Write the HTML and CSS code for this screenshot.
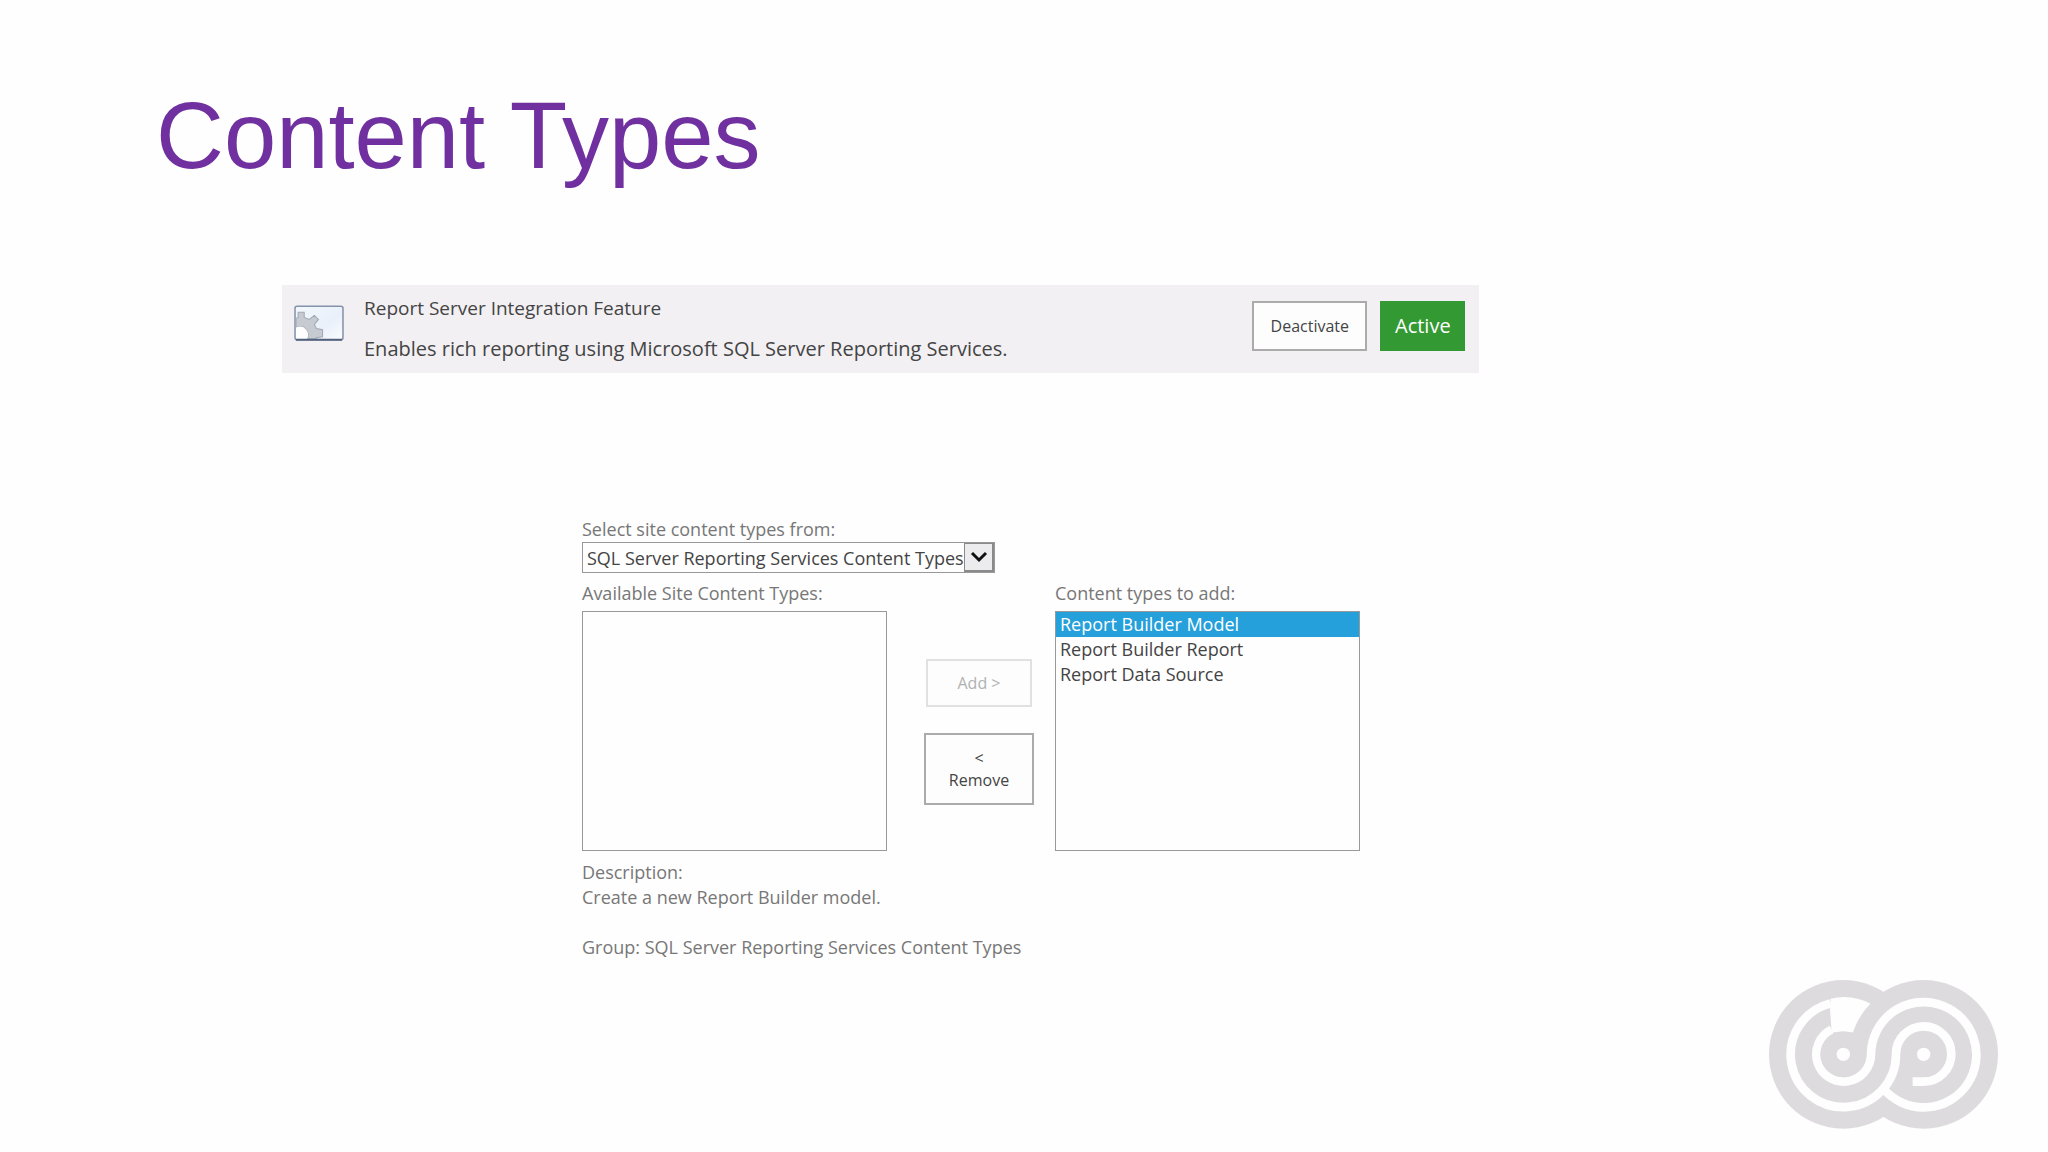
FILE: index.html
```
<!DOCTYPE html>
<html lang="en">
<head>
    <meta charset="UTF-8">
    <meta name="viewport" content="width=device-width, initial-scale=1.0">
    <title>Content Types</title>
    <link rel="stylesheet" href="styles.css">
</head>
<body>
    <main class="slide">
        <h1>Content Types</h1>

        <section class="feature">
            <svg class="feature-icon" viewBox="0 0 49 35" aria-hidden="true">
                <defs>
                    <linearGradient id="panel" x1="0" y1="0" x2="1" y2="1">
                        <stop offset="0" stop-color="#f4f8fd"/>
                        <stop offset="0.6" stop-color="#e9f0fa"/>
                        <stop offset="1" stop-color="#fbfcff"/>
                    </linearGradient>
                </defs>
                <rect x="1" y="1" width="47" height="33" rx="2" fill="url(#panel)" stroke="#8592ab" stroke-width="1.5"/>
                <path d="M2 13 L4 12 V7 H10 V12 L15 14 L20 10 L24 14 L20 19 L22 23 L28 24 V31 L22 32 V33 H13 Q15 28 12 24 Q8 19 2 22 Z" fill="#c6cad1" stroke="#a2a8b2"/>
                <path d="M2 22 Q8 19 12 24 Q15 28 13 33 H2 Z" fill="#fff"/>
                <path d="M2 34 H47" stroke="#52617c" stroke-width="2"/>
            </svg>
            <div class="feature-text">
                <h2>Report Server Integration Feature</h2>
                <p>Enables rich reporting using Microsoft SQL Server Reporting Services.</p>
            </div>
            <button type="button" class="btn deactivate">Deactivate</button>
            <span class="status">Active</span>
        </section>

        <form class="picker">
            <label for="group">Select site content types from:</label>
            <div class="dropdown">
                <select id="group">
                    <option>SQL Server Reporting Services Content Types</option>
                </select>
                <span class="arrow">
                    <svg viewBox="0 0 18 12" aria-hidden="true"><path d="M2 2 L9 9 L16 2" fill="none" stroke="#111" stroke-width="3"/></svg>
                </span>
            </div>
            <div class="lists">
                <div class="list">
                    <label for="available">Available Site Content Types:</label>
                    <select id="available" size="8" multiple></select>
                </div>
                <div class="moves">
                    <button type="button" class="btn add" disabled>Add &gt;</button>
                    <button type="button" class="btn remove">&lt;<br>Remove</button>
                </div>
                <div class="list">
                    <label for="chosen">Content types to add:</label>
                    <select id="chosen" size="8" multiple>
                        <option selected>Report Builder Model</option>
                        <option>Report Builder Report</option>
                        <option>Report Data Source</option>
                    </select>
                </div>
            </div>
            <p>Description:<br>Create a new Report Builder model.</p>
            <p class="group">Group: SQL Server Reporting Services Content Types</p>
        </form>

        <svg class="logo" viewBox="58 58 687 447" role="img" aria-label="Logo">
            <g fill="#dedbdf">
                <circle cx="281" cy="281" r="223"/>
                <circle cx="522" cy="281" r="223"/>
            </g>
            <path d="M243 114 L241 145 L246 215 L310 215 A223 223 0 0 1 362 129 A171 171 0 0 0 243 114 Z" fill="#fefefe"/>
            <g fill="none" stroke="#fefefe" stroke-width="26">
                <path d="M243 128 A158 158 0 1 0 439 281 A83 83 0 1 1 522 363 H489"/>
                <path d="M246 207 A82 82 0 1 0 364 281 A158 158 0 1 1 402 385"/>
            </g>
            <circle cx="281" cy="281" r="69" fill="#dedbdf"/>
            <circle cx="281" cy="281" r="20" fill="#fefefe"/>
            <circle cx="522" cy="281" r="20" fill="#fefefe"/>
        </svg>
    </main>
</body>
</html>
```
FILE: styles.css
```
* {
    box-sizing: border-box;
}
body {
    margin: 0;
    background-color: #fefefe;
    color: #444;
    font-family: "Open Sans", "Noto Sans", sans-serif;
    font-size: 18px;
    line-height: 25px;
}
h1, h2, p {
    margin: 0;
    font-weight: normal;
}
.slide {
    display: flex;
    flex-direction: column;
    min-height: 100vh;
    padding: 80px 50px 23px 156px;
}
h1 {
    color: #7030a0;
    font-family: "Liberation Sans", Arial, sans-serif;
    font-size: 94px;
    line-height: 112px;
}
.feature {
    display: flex;
    align-items: flex-start;
    width: 65%;
    margin: 93px 0 0 126px;
    padding: 11px 14px 12px 12px;
    background-color: #f2f0f3;
}
.feature-icon {
    width: 50px;
    height: 36px;
    margin: 9px 20px 0 0;
}
.feature-text {
    flex: 1;
}
.feature h2 {
    font-size: 19px;
    line-height: 25px;
}
.feature p {
    margin-top: 15px;
    font-size: 20px;
}
.btn {
    border: 2px solid #ababab;
    background-color: #fdfdfd;
    color: #444;
    font-family: inherit;
    font-size: 16px;
    line-height: 22px;
}
.deactivate {
    width: 115px;
    height: 50px;
    margin: 5px 13px 0 0;
    padding: 0;
}
.status {
    width: 85px;
    margin-top: 5px;
    background-color: #339933;
    color: #fff;
    font-size: 20px;
    line-height: 50px;
    text-align: center;
}
.picker {
    margin: 144px 0 0 426px;
    color: #777;
}
.picker label {
    display: block;
}
.picker select {
    border: 1px solid #999;
    border-radius: 0;
    background-color: #fefefe;
    color: #444;
    font-family: inherit;
    font-size: 18px;
}
.dropdown {
    position: relative;
    width: 413px;
}
.dropdown select {
    display: block;
    appearance: none;
    width: 100%;
    height: 31px;
    padding: 0 30px 0 4px;
}
.arrow {
    position: absolute;
    top: 1px;
    right: 1px;
    display: flex;
    align-items: center;
    justify-content: center;
    width: 30px;
    height: 29px;
    border: 1px solid #8a8a8a;
    border-width: 1px 2px 2px 1px;
    background-color: #ececee;
    pointer-events: none;
}
.arrow svg {
    width: 18px;
    height: 12px;
}
.lists {
    display: flex;
    margin: 8px 0 9px;
}
.list label {
    margin-bottom: 6px;
    line-height: 24px;
}
.list select {
    display: block;
    width: 305px;
    height: 240px;
    padding: 0;
    overflow: hidden;
}
.list option {
    min-height: 25px;
    padding: 0 4px;
    line-height: 25px;
}
.list option:checked {
    background: linear-gradient(#26a0da, #26a0da);
    color: #fff;
}
.moves {
    display: flex;
    flex-direction: column;
    align-items: center;
    gap: 26px;
    width: 168px;
    padding: 78px 0 0 16px;
}
.add {
    width: 106px;
    height: 48px;
    border-color: #e1e1e1;
    color: #b1b1b1;
}
.remove {
    width: 110px;
    height: 72px;
}
.group {
    margin-top: 25px;
}
.logo {
    width: 229px;
    height: 149px;
    margin: auto 0 0 auto;
}
```
